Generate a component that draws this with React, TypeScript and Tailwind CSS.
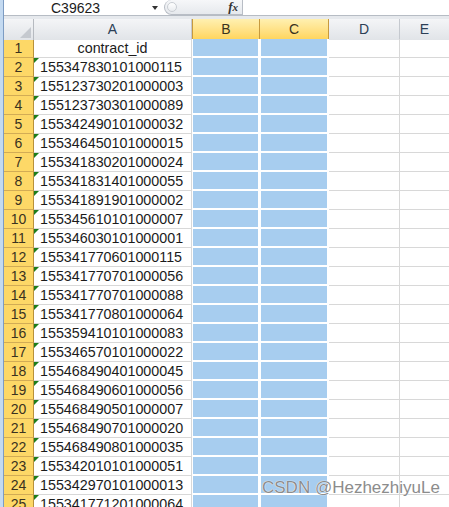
import React from 'react'

const ids = [
  'contract_id',
  '155347830101000115',
  '155123730201000003',
  '155123730301000089',
  '155342490101000032',
  '155346450101000015',
  '155341830201000024',
  '155341831401000055',
  '155341891901000002',
  '155345610101000007',
  '155346030101000001',
  '155341770601000115',
  '155341770701000056',
  '155341770701000088',
  '155341770801000064',
  '155359410101000083',
  '155346570101000022',
  '155468490401000045',
  '155468490601000056',
  '155468490501000007',
  '155468490701000020',
  '155468490801000035',
  '155342010101000051',
  '155342970101000013',
  '155341771201000064',
]

const cols = 'grid grid-cols-[30px_158px_68px_69px_71px_1fr] grid-rows-[19px]'

function Selected() {
  return (
    <div className="flex h-[19px] flex-col bg-white pl-px pr-[2px]">
      <div className="h-[17px] shrink-0 bg-[#a7cdef]" />
      <div className="h-[2px] shrink-0 bg-white" />
    </div>
  )
}

export default function App() {
  return (
    <div className="relative flex w-[449px] h-[507px] overflow-hidden bg-white font-['Liberation_Sans',Arial,sans-serif] text-[14px] text-[#1b1b1b]">
      {/* window edge */}
      <div className="w-[4px] shrink-0 bg-[#c4daf1] border-r border-[#7d9cc3]" />

      <div className="flex flex-1 flex-col min-w-0">
        {/* formula bar */}
        <div className="flex h-[16px] shrink-0 items-center border-b border-[#b6bcc4] bg-white">
          <div className="flex h-full w-[160px] items-center">
            <span className="pl-[47px] leading-[16px]">C39623</span>
            <span className="ml-auto mr-[6px] h-0 w-0 border-x-[3.5px] border-t-[4px] border-x-transparent border-t-[#333]" />
          </div>
          <div className="flex h-full w-[78px] items-center rounded-l-full border border-r-0 border-t-0 border-[#b8bdc5] bg-gradient-to-b from-[#f6f7f9] to-[#e6e9ed]">
            <span className="ml-[2px] h-[10px] w-[10px] rounded-full border border-[#c9cdd3] bg-gradient-to-b from-white to-[#e9ecef]" />
            <span className="ml-auto mr-[4px] font-['Liberation_Serif',serif] italic font-bold text-[13px] leading-[14px] text-[#333]">
              f<span className="text-[11px]">x</span>
            </span>
          </div>
          <div className="h-full flex-1 border-l border-[#b8bdc5] bg-white" />
        </div>
        <div className="h-[3px] shrink-0 bg-[#e6e9ed]" />

        {/* column headers */}
        <div className="grid h-[20px] shrink-0 grid-cols-[30px_158px_68px_69px_71px_1fr] border-b border-[#b6bac0] text-[#2c3e55]">
          <div className="relative border-r border-[#b6bac0] bg-gradient-to-b from-[#f4f5f7] to-[#e1e4e8]">
            <svg className="absolute right-[2px] bottom-[2px]" width="11" height="11" viewBox="0 0 11 11">
              <polygon points="11,0 11,11 0,11" fill="#c5c9cf" />
            </svg>
          </div>
          <div className="flex items-center justify-center border-r border-[#c5c9cf] bg-gradient-to-b from-[#f4f5f7] to-[#e1e4e8]">A</div>
          <div className="flex items-center justify-center border-x border-[#c79a3e] bg-gradient-to-b from-[#fff0b0] to-[#ffd458] text-[#3a3220]">B</div>
          <div className="flex items-center justify-center border-r border-[#c79a3e] bg-gradient-to-b from-[#fff0b0] to-[#ffd458] text-[#3a3220]">C</div>
          <div className="flex items-center justify-center border-r border-[#c5c9cf] bg-gradient-to-b from-[#f4f5f7] to-[#e1e4e8]">D</div>
          <div className="flex items-center justify-center bg-gradient-to-b from-[#f4f5f7] to-[#e1e4e8]">E</div>
        </div>

        {/* rows */}
        {ids.map((id, i) => (
          <div key={i} className={`${cols} h-[19px] shrink-0`}>
            <div className="flex items-center justify-center border-r border-b border-r-[#b8913a] border-b-[#d2ac55] bg-[#fdd867] text-[#3a3220]">
              {i + 1}
            </div>
            <div
              className={`relative flex items-center border-r border-b border-[#d8d8d8] text-[14.3px] leading-[18px] ${
                i === 0 ? 'justify-center' : 'pl-[6px]'
              }`}
            >
              {i > 0 && (
                <span className="absolute left-0 top-0 h-0 w-0 border-t-[5px] border-r-[5px] border-t-[#1d7d1d] border-r-transparent" />
              )}
              {id}
            </div>
            <Selected />
            <Selected />
            <div className="border-r border-b border-[#d8d8d8]" />
            <div className="border-b border-[#d8d8d8]" />
          </div>
        ))}
      </div>

      {/* watermark */}
      <div className="pointer-events-none absolute left-[262px] top-[477px] text-[17px] leading-[22px] text-[#8c8c8c] [text-shadow:0_0_1px_#fff,0_0_1px_#fff]">
        CSDN @HezhezhiyuLe
      </div>
    </div>
  )
}
